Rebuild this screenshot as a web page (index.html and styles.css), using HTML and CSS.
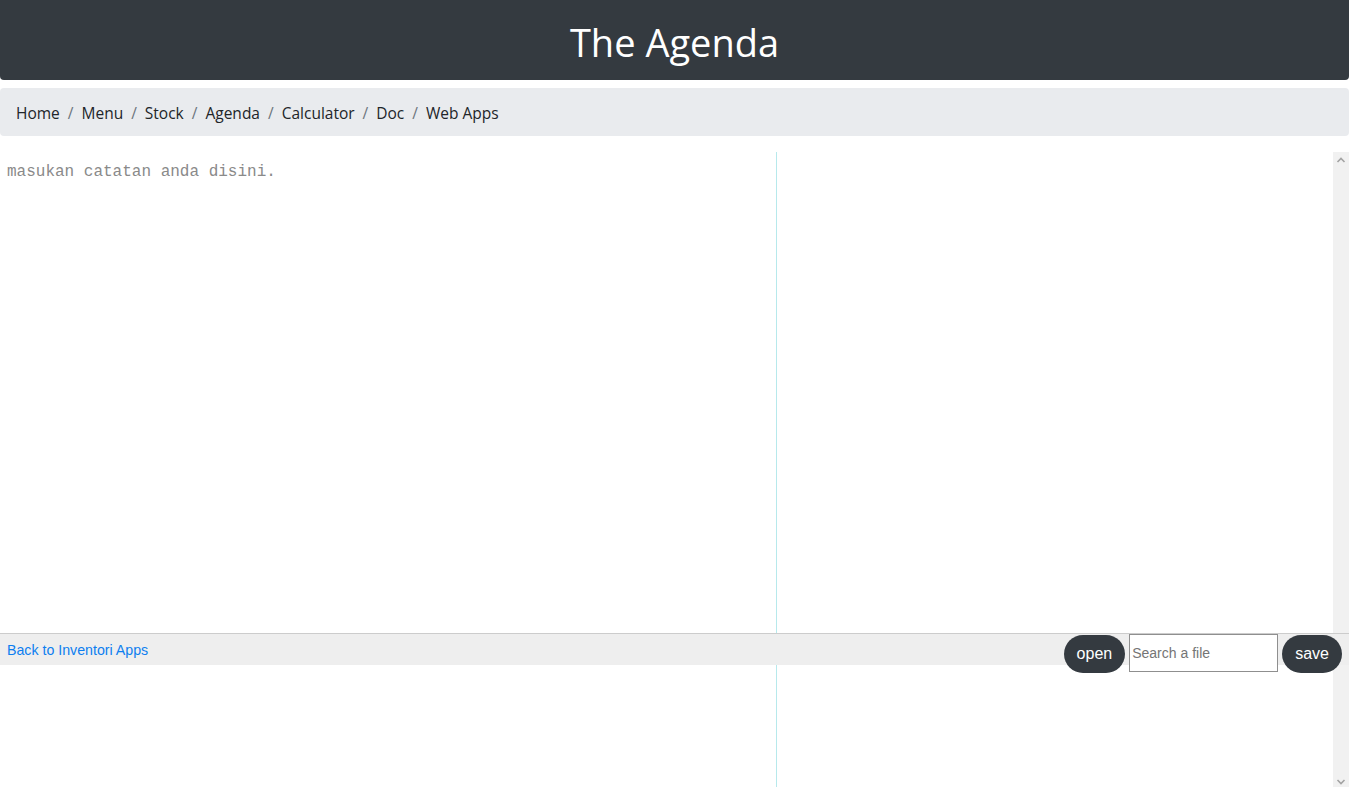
FILE: index.html
```html
<!doctype html>
<html>
<head>
    <meta charset="utf-8"/>
    <title>The Agenda</title>
    <link rel="stylesheet" href="styles.css">
</head>
<body>
    <header class="topbar">
        <h1>The Agenda</h1>
    </header>

    <nav class="crumbs">
        <a href="#">Home</a><span class="sep">/</span>
        <a href="#">Menu</a><span class="sep">/</span>
        <a href="#">Stock</a><span class="sep">/</span>
        <a href="#">Agenda</a><span class="sep">/</span>
        <a href="#">Calculator</a><span class="sep">/</span>
        <a href="#">Doc</a><span class="sep">/</span>
        <a href="#">Web Apps</a>
    </nav>

    <div class="editor">
        <textarea class="note" placeholder="masukan catatan anda disini."></textarea>
        <div class="preview"></div>
        <div class="scroll">
            <svg width="16" height="16" viewBox="0 0 16 16"><path d="M4.5 10 8 6.5 11.5 10" fill="none" stroke="#a3a3a3" stroke-width="1.6"/></svg>
            <svg width="16" height="16" viewBox="0 0 16 16"><path d="M4.5 6 8 9.5 11.5 6" fill="none" stroke="#a3a3a3" stroke-width="1.6"/></svg>
        </div>

        <!-- toolbar sits over the editor -->
        <div class="bar">
            <a class="back" href="#">Back to Inventori Apps</a>
            <div class="tools">
                <button class="pill">open</button>
                <input class="search" type="text" placeholder="Search a file">
                <button class="pill">save</button>
            </div>
        </div>
    </div>
</body>
</html>
```

FILE: styles.css
```css
* {
    box-sizing:border-box;
}
html {
    font-family:"Open Sans","Noto Sans",Arial,sans-serif;
}
body {
    margin:0;
    color:#212529;
    background:#ffffff;
    overflow:hidden;
}

.topbar {
    background:#343a40;
    height:80px;
    border-radius:0 0 4px 4px;
    display:flex;
    align-items:center;
    justify-content:center;
}
.topbar h1 {
    margin:0;
    color:#ffffff;
    font-weight:400;
    font-size:38px;
    line-height:1.2;
    padding-top:6px;
}

.crumbs {
    margin-top:8px;
    background:#e9ebee;
    height:48px;
    border-radius:4px;
    padding:0 16px;
    display:flex;
    align-items:center;
    font-size:15.5px;
    padding-top:2px;
}
.crumbs a {
    color:#212529;
    text-decoration:none;
}
.crumbs .sep {
    color:#6c757d;
    padding:0 8px;
}

.editor {
    position:relative;
    margin-top:16px;
    height:640px;
    display:flex;
}
.note {
    width:777px;
    height:100%;
    border:none;
    border-right:1px solid #b7e9ec;
    margin:0;
    padding:8px 7px;
    resize:none;
    outline:none;
    font-family:"Liberation Mono","Courier New",monospace;
    font-size:16px;
    line-height:24px;
    color:#333333;
}
.note::placeholder {
    color:#8a8a8a;
}
.preview {
    flex:1;
}
.scroll {
    width:16px;
    background:#f1f1f1;
    display:flex;
    flex-direction:column;
    justify-content:space-between;
    padding-bottom:2px;
}
.scroll svg { display:block; }

.bar {
    position:absolute;
    left:0;
    right:0;
    top:481px;
    height:32px;
    background:#eeeeee;
    border-top:1px solid #cccccc;
    display:flex;
    justify-content:space-between;
    align-items:flex-start;
    font-family:"Liberation Sans",Arial,sans-serif;
}
.back {
    color:#0d7ef0;
    text-decoration:none;
    font-size:14.2px;
    margin:8px 0 0 7px;
}
.tools {
    display:flex;
    gap:4px;
    padding-right:7px;
}
.pill {
    background:#343a40;
    color:#ffffff;
    border:none;
    border-radius:19px;
    height:38px;
    margin-top:1px;
    padding:0 13px;
    font-family:"Liberation Sans",Arial,sans-serif;
    font-size:16px;
}
.search {
    width:149px;
    height:38px;
    border:1px solid #8f8f8f;
    padding:0 2px;
    font-family:"Liberation Sans",Arial,sans-serif;
    font-size:14px;
}
.search::placeholder {
    color:#757575;
}
```
